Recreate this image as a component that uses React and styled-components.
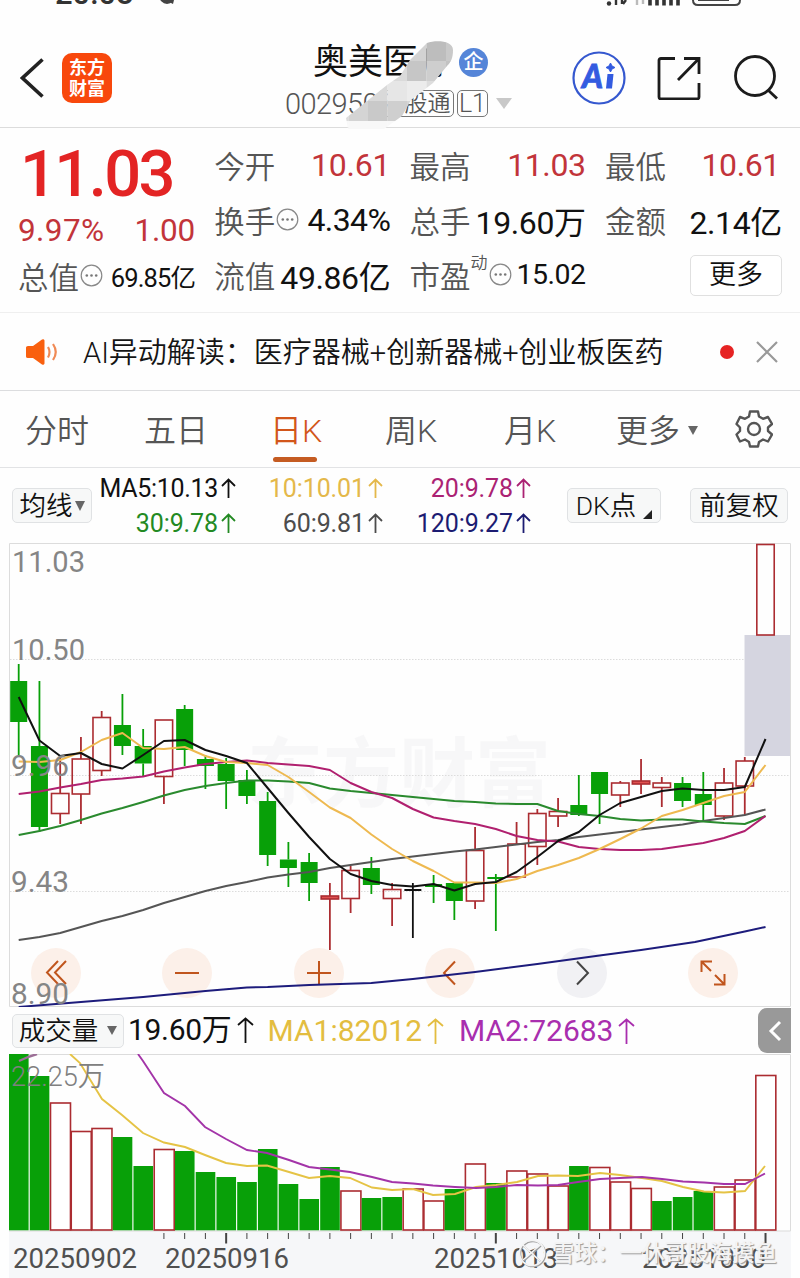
import React from "react";
import styled, { createGlobalStyle } from "styled-components";

const Global = createGlobalStyle`
  * { box-sizing: border-box; }
  body { margin: 0; background: #fff; }
`;
const FONT = `Roboto, "Noto Sans CJK SC", sans-serif`;

const Page = styled.div`
  width: 800px;
  height: 1278px;
  overflow: hidden;
  background: #fefefe;
  font-family: ${FONT};
  font-weight: 350;
  color: #151515;
  white-space: nowrap;
`;

/* ---------- header ---------- */
const StatusBar = styled.div`
  height: 14px;
  overflow: hidden;
  display: flex;
  justify-content: space-between;
  padding: 0 58px 0 55px;
`;
const Clock = styled.span`
  font-size: 31px;
  line-height: 32px;
  margin-top: -22px;
  font-weight: 500;
  color: #333;
  display: flex;
  gap: 24px;
`;
const Header = styled.header`
  height: 114px;
  border-bottom: 1px solid #dcdcdc;
  display: flex;
  align-items: center;
  padding: 0 20px;
  position: relative;
`;
const Logo = styled.div`
  width: 50px;
  height: 50px;
  margin: 15px 0 0 18px;
  border-radius: 10px;
  background: #f8480c;
  color: #fff;
  font: 700 18px/21px "Noto Sans CJK SC", sans-serif;
  display: grid;
  place-content: center;
  text-align: center;
  padding-bottom: 3px;
`;
const TitleBlock = styled.div`
  width: 229px;
  margin: 24px 0 0 173px;
`;
const TitleRow = styled.div`
  display: flex;
  align-items: center;
  height: 42px;
  padding-left: 28px;
  gap: 6px;
  font-size: 35px;
  line-height: 42px;
  font-weight: 400;
  color: #111;
`;
const Verified = styled.span`
  width: 29px;
  height: 29px;
  border-radius: 50%;
  background: #5585d8;
  color: #fff;
  font-size: 20px;
  line-height: 28px;
  text-align: center;
  font-weight: 500;
`;
const CodeRow = styled.div`
  display: flex;
  align-items: center;
  height: 40px;
  color: #555;
  font-size: 29px;
  font-weight: 350;
  letter-spacing: -0.6px;
`;
const Tag = styled.span`
  height: 27px;
  border: 1px solid #777;
  border-radius: 5px;
  font-size: ${(p) => p.$size}px;
  line-height: 25px;
  width: ${(p) => p.$w}px;
  margin-left: ${(p) => p.$ml}px;
  text-align: center;
  letter-spacing: 0;
  overflow: hidden;
`;
const Caret = styled.i`
  border: ${(p) => p.$w / 2}px solid transparent;
  border-top: ${(p) => p.$h}px solid ${(p) => p.$c || "#666"};
  border-bottom: 0;
  margin-left: ${(p) => p.$ml || 0}px;
`;
const Mosaic = styled.svg`
  position: absolute;
  left: 335px;
  top: 22px;
`;
const Actions = styled.div`
  display: flex;
  align-items: center;
  gap: 31px;
  margin: 15px 0 0 58px;
`;

/* ---------- quote ---------- */
const Quote = styled.section`
  height: 185px;
  border-bottom: 1px solid #efefef;
  padding: 9px 19px 0 18px;
  display: grid;
  grid-template-columns: 177px 176px 176px 177px;
  column-gap: 19.3px;
`;
const QuoteCol = styled.div`
  display: grid;
  grid-template-rows: 55px 55px 55px;
`;
const PriceCol = styled.div`
  display: grid;
  grid-template-rows: 74px 38px 53px;
`;
const Price = styled.div`
  padding: 2px 0 0 2px;
  font-size: 65px;
  line-height: 70px;
  font-weight: 500;
  color: #e32424;
  letter-spacing: -2.6px;
`;
const Cell = styled.div`
  display: flex;
  align-items: center;
  justify-content: space-between;
`;
const Label = styled.span`
  font-size: 30.5px;
  color: #555;
  display: flex;
  align-items: center;
`;
const Value = styled.span`
  font-size: ${(p) => p.$size || 32}px;
  font-weight: 400;
  letter-spacing: ${(p) => p.$ls ?? -0.4}px;
  color: ${(p) => (p.$red ? "#c2343a" : "#111")};
  margin-right: ${(p) => p.$mr || 0}px;
`;
const Sup = styled.sup`
  font-size: 17px;
  line-height: 17px;
  align-self: flex-start;
  margin: 2px 0 0 0;
`;
const MoreButton = styled.button`
  width: 92px;
  height: 41px;
  margin-left: auto;
  position: relative;
  top: 1px;
  background: #fff;
  border: 1px solid #e0e0e0;
  border-radius: 5px;
  font: 350 27px/36px ${FONT};
  color: #111;
  padding: 0 0 2px;
`;

/* ---------- news ---------- */
const News = styled.section`
  height: 78px;
  border-bottom: 1px solid #dcdddf;
  display: flex;
  align-items: center;
  padding: 0 22px 0 24px;
`;
const NewsText = styled.span`
  flex: 1;
  margin-left: 24px;
  padding-bottom: 4px;
  font-size: 29px;
  color: #151515;
`;
const Dot = styled.i`
  width: 14px;
  height: 14px;
  border-radius: 50%;
  background: #e62323;
  margin-right: 22px;
`;

/* ---------- tabs ---------- */
const Tabs = styled.nav`
  height: 77px;
  border-bottom: 1px solid #e2e3e5;
  padding-left: 25px;
  display: grid;
  grid-template-columns: 119px 126px 115px 119px 112px 111px 60px;
`;
const Tab = styled.div`
  font-size: 32px;
  line-height: 46px;
  padding-top: ${(p) => (p.$icon ? 0 : 3)}px;
  color: ${(p) => (p.$active ? "#d2561b" : "#555")};
  display: flex;
  align-items: center;
  position: relative;
  &::after {
    content: "";
    display: ${(p) => (p.$active ? "block" : "none")};
    position: absolute;
    left: 3px;
    bottom: 5px;
    width: 44px;
    height: 5px;
    border-radius: 3px;
    background: #c55c22;
  }
`;

/* ---------- moving averages ---------- */
const MaRow = styled.section`
  height: 75px;
  display: flex;
  align-items: center;
  padding: 0 11px 0 12px;
`;
const Chip = styled.button`
  height: ${(p) => p.$h || 35}px;
  width: ${(p) => p.$w}px;
  padding: 0;
  border: 1px solid #e0e2e4;
  border-radius: 5px;
  background: #f7f8f8;
  color: #111;
  font: 350 ${(p) => p.$size || 26.5}px/30px ${FONT};
  display: flex;
  align-items: center;
  justify-content: center;
  margin-left: ${(p) => p.$ml || 0}px;
`;
const MaGrid = styled.div`
  display: grid;
  grid-template-columns: 144px 147px 148px;
  grid-template-rows: 35px 35px;
`;
const MaItem = styled.span`
  display: flex;
  align-items: center;
  justify-content: flex-end;
  gap: 3px;
  font-size: 25px;
  font-weight: 400;
  letter-spacing: ${(p) => p.$ls ?? -0.1}px;
  color: ${(p) => p.$c};
`;

/* ---------- charts ---------- */
const ChartBox = styled.section`
  height: 464px;
  margin-left: 9px;
  width: 782px;
  position: relative;
`;
const ChartSvg = styled.svg`
  display: block;
  position: relative;
`;
const Controls = styled.div`
  position: absolute;
  left: 22px;
  right: 53px;
  bottom: 9px;
  display: flex;
  justify-content: space-between;
`;
const Round = styled.div`
  width: 50px;
  height: 50px;
  border-radius: 50%;
  background: ${(p) => (p.$grey ? "#f1f1f4" : "#fcf0e9")};
  display: grid;
  place-items: center;
`;
const VolumeHead = styled.div`
  height: 47px;
  display: flex;
  align-items: center;
  padding: 0 9px 0 12px;
`;
const VolItem = styled.span`
  display: flex;
  align-items: center;
  gap: 5px;
  font-size: 30px;
  font-weight: 400;
  line-height: 40px;
  padding-bottom: ${(p) => p.$pb || 0}px;
  color: ${(p) => p.$c};
  margin-left: ${(p) => p.$ml}px;
  letter-spacing: ${(p) => p.$ls}px;
`;
const Collapse = styled.div`
  width: 33px;
  height: 45px;
  border-radius: 9px 0 0 9px;
  background: #999;
  margin-left: auto;
  display: grid;
  place-items: center;
`;
const BottomBox = styled.section`
  width: 782px;
  height: 224px;
  margin-left: 9px;
`;

const Arrow = ({ h = 20, w = 15 }) => (
  <svg width={w} height={h} viewBox={`0 0 ${w} ${h}`} fill="none" stroke="currentColor" strokeWidth="1.8">
    <path d={`M${w / 2} ${h}V1.5M1 8L${w / 2} 1.5L${w - 1} 8`} />
  </svg>
);
const Info = () => (
  <svg width="23" height="23" viewBox="0 0 23 23" fill="none" stroke="#888" strokeWidth="1.2" style={{ marginLeft: 1 }}>
    <circle cx="11.5" cy="11.5" r="10.3" />
    <g fill="#777" stroke="none">
      <circle cx="6.8" cy="11.5" r="1.3" />
      <circle cx="11.5" cy="11.5" r="1.3" />
      <circle cx="16.2" cy="11.5" r="1.3" />
    </g>
  </svg>
);

const X0 = 18.7;
const STEP = 20.745;
const RED = "#ab2c31";
const GREEN = "#08a008";
const px = (i) => X0 + i * STEP;

// [kind, body top, body bottom, wick top, wick bottom]
const candles = [
  ["g", 681, 722, 664, 756], ["g", 746, 827, 681, 832], ["r", 793.5, 813.5, 755, 824],
  ["r", 759, 794, 737, 824], ["r", 717.5, 770.5, 711, 776], ["g", 725, 746, 694, 755],
  ["g", 746, 763.5, 729, 776], ["r", 720, 776.5, 720, 804], ["g", 709, 750, 705, 766],
  ["g", 759, 766, 755, 789], ["g", 764, 781, 758, 809], ["g", 780, 796, 770, 804],
  ["g", 801, 855, 792, 866], ["g", 859.5, 868, 842, 887], ["g", 862, 883, 853, 901],
  ["t", 896, 899, 883, 950], ["r", 870.5, 898.5, 866, 913], ["g", 868, 885, 857, 894],
  ["r", 889.5, 898.5, 883, 926], ["k", 889, 891, 883, 938], ["g", 884, 887, 875, 903],
  ["g", 883, 901, 883, 920], ["r", 850.5, 901, 827, 909], ["g", 877, 879, 874, 931],
  ["r", 844, 877, 822, 877], ["r", 813.5, 846.5, 809, 865], ["r", 811.5, 816, 798, 827],
  ["g", 805, 815, 775, 816], ["g", 772, 794, 772, 824], ["r", 783, 795, 781, 807],
  ["t", 781, 784, 759, 794], ["r", 783, 787.5, 777, 807], ["g", 783, 801, 777, 807],
  ["g", 794, 805, 772, 821], ["r", 783, 816, 768, 820], ["r", 761, 786, 757, 815],
  ["r", 544.5, 635, 544.5, 635],
];
const ma120 = [[0, 1007], [3, 1002], [6, 997], [9, 991], [11, 987.5], [12, 987], [14, 985], [17, 983], [19, 979], [22, 972], [25, 964], [28, 955.5], [30, 950], [32.6, 942], [35, 931.5], [36, 927]];
const lines = [
  ["#1d1c7c", ma120],
  ["#555", [940, 937, 933, 927, 921, 916, 910, 903, 897, 891, 886, 882, 877.5, 874.5, 872, 868, 865, 862, 859, 856.5, 854, 851.5, 849.5, 847, 844.5, 842, 840, 837, 834.5, 832, 829.5, 827, 824.5, 821, 818, 815, 809.5]],
  ["#2a8a2e", [835, 831, 826, 820, 813.5, 808, 802, 795.5, 790, 786, 783, 780.5, 780.5, 781.5, 783, 788.5, 791, 793, 795, 797, 799, 801, 802, 803.5, 804, 804, 811, 814, 816, 819, 820.5, 819.5, 819.5, 821.5, 823, 824, 816]],
  ["#b0206f", [794, 791.5, 787.5, 784, 780, 778.5, 776.5, 771.5, 767.5, 764, 762, 760.5, 763, 764.5, 766, 770, 783, 792, 798, 809, 817.5, 821, 824, 829, 836, 840, 841.5, 847, 849, 850, 850, 849, 846, 843, 838, 831, 816]],
  ["#eeb950", [761.5, 762, 760, 752, 740, 733, 748, 749, 747, 756, 762, 763, 765, 777, 792, 807.5, 818, 834.5, 849, 861, 871, 882.5, 882.5, 883, 879, 871, 865, 858, 849, 839, 828.5, 816, 810, 803, 796, 792, 765]],
  ["#111", [697, 740.5, 756, 753, 764, 768.5, 755, 741, 740, 750, 756, 763, 788, 813, 837, 859, 874, 881, 885, 886.5, 884, 890.5, 884, 882, 872, 857, 841, 832, 815, 803, 797, 791, 788.5, 790, 790, 787, 739]],
];
const toPoints = (pts) =>
  pts.map((p, i) => (Array.isArray(p) ? `${px(p[0])},${p[1]}` : `${px(i)},${p}`)).join(" ");

const Candle = ({ i, c: [k, t, b, wt, wb] }) => {
  const x = px(i);
  const color = k === "g" ? GREEN : k === "k" ? "#111" : RED;
  const hollow = k === "r";
  return (
    <g stroke={color} strokeWidth="1.8">
      {wt < t && <line x1={x} x2={x} y1={wt} y2={t} />}
      {wb > b && <line x1={x} x2={x} y1={b} y2={wb} />}
      {hollow || k === "t" ? (
        <rect x={x - 8.7} y={t} width="17.4" height={b - t} fill={k === "t" ? "#e05050" : "none"} strokeWidth="1.6" />
      ) : (
        <rect x={x - 8.5} y={t} width="17" height={b - t} fill={color} stroke="none" />
      )}
    </g>
  );
};

const Axis = ({ x, y, w, children }) => (
  <text x={x} y={y} textLength={w} lengthAdjust="spacingAndGlyphs" fontSize="29" fill="#858585" fontFamily={FONT} fontWeight="400">
    {children}
  </text>
);

const KChart = () => (
  <ChartSvg width="782" height="464" viewBox="9 543 782 464">
    <text x="247" y="801" fontSize="76" fontWeight="700" textLength="304" fill="#f6f6f7" fillOpacity=".9" fontFamily={`"Noto Sans CJK SC", sans-serif`}>东方财富</text>
    <g stroke="#dcdcdc" strokeDasharray="1.5 1.5">
      {[659.5, 775.5, 891.5].map((y) => <line key={y} x1="10" x2="790" y1={y} y2={y} />)}
    </g>
    <path d="M9.5 543.5H790.5V1006.5H9.5Z" fill="none" stroke="#dcdcdc" />
    <rect x="744.5" y="635" width="45.5" height="121" fill="#d5d5e0" />
    {candles.map((c, i) => <Candle key={i} i={i} c={c} />)}
    {lines.map(([color, pts]) => (
      <polyline key={color} points={toPoints(pts)} fill="none" stroke={color} strokeWidth="2" strokeLinejoin="round" />
    ))}
    <Axis x="12" y="572" w="73">11.03</Axis>
    <Axis x="12" y="660" w="73">10.50</Axis>
    <Axis x="11" y="776" w="58">9.96</Axis>
    <Axis x="11" y="892" w="58">9.43</Axis>
    <Axis x="11" y="1004" w="58">8.90</Axis>
  </ChartSvg>
);

const volumes = [
  ["g", 1054], ["g", 1076], ["r", 1103], ["r", 1131.5], ["r", 1128.5], ["g", 1137], ["g", 1166], ["r", 1149.5],
  ["g", 1151], ["g", 1172], ["g", 1177], ["g", 1182], ["g", 1149], ["g", 1184], ["g", 1199], ["g", 1167],
  ["r", 1191], ["g", 1198], ["g", 1197], ["r", 1189], ["r", 1201], ["g", 1189], ["r", 1164], ["g", 1183],
  ["r", 1171], ["r", 1174], ["r", 1186], ["g", 1166], ["r", 1167.5], ["r", 1182], ["r", 1188.5], ["g", 1201],
  ["g", 1197], ["g", 1191], ["r", 1187], ["r", 1180], ["r", 1075.5],
];
const volYellow = "70,1054 80,1063 102,1099 122,1115 143,1133 164,1142.5 185,1147 205,1155 226,1163 247,1166 267,1165.5 289,1172 309,1178 330,1176 350,1178 372,1187.5 392,1190 413,1189 433,1195 455,1194 476,1187 496,1185 517,1182 538,1176 558,1175.5 578,1176 600,1173 620,1175 642,1178 662,1181 683,1187 704,1191.5 724,1192.5 745,1191 765,1166";
const volPurple = "138,1054 143,1061 164,1093 185,1106 205,1127 226,1139 247,1150 267,1153 289,1160 309,1167 330,1169.5 350,1172 372,1177 392,1182 413,1183.5 433,1185.5 455,1187 476,1188 496,1187 517,1185 538,1185.5 558,1185 578,1182 600,1179 620,1178 642,1177 662,1179 683,1181.5 704,1182.5 724,1184 745,1184 765,1173.5";

const DateLabel = ({ x, w, children }) => (
  <text x={x} y="1268" textLength={w} lengthAdjust="spacingAndGlyphs" fontSize="28" fill="#505050" fontFamily={FONT} fontWeight="400">
    {children}
  </text>
);

const VolumeChart = () => (
  <ChartSvg width="782" height="224" viewBox="9 1054 782 224">
    <rect x="9" y="1230.5" width="782" height="48" fill="#f6f7f9" />
    <path d="M9 1054.5H790.5V1231H9" fill="none" stroke="#dcdcdc" />
    {volumes.map(([k, t], i) =>
      k === "g" ? (
        <rect key={i} x={px(i) - 9.7} y={t} width="19.6" height={1230.3 - t} fill={GREEN} />
      ) : (
        <rect key={i} x={px(i) - 9.7} y={t} width="20" height={1230 - t} fill="#fff" stroke={RED} strokeWidth="1.6" />
      )
    )}
    <polyline points="19,1061 28,1057 37,1054" fill="none" stroke="#9c6f96" strokeWidth="2.4" />
    <polyline points={volYellow} fill="none" stroke="#e5c345" strokeWidth="1.9" />
    <polyline points={volPurple} fill="none" stroke="#a334a8" strokeWidth="1.9" />
    {volumes.map((_, i) =>
      i > 6 ? (
        <line key={i} x1={px(i)} x2={px(i)} y1="1233" y2={i % 13 === 10 ? 1243.5 : 1239} stroke="#444" strokeWidth={i % 13 === 10 ? 2 : 1} />
      ) : null
    )}
    <text x="11" y="1086" textLength="94" lengthAdjust="spacingAndGlyphs" fontSize="28" fill="#808080" fontFamily={FONT} fontWeight="350">22.25万</text>
    <DateLabel x="13" w="124">20250902</DateLabel>
    <DateLabel x="165" w="124">20250916</DateLabel>
    <DateLabel x="434" w="124">20251013</DateLabel>
    <DateLabel x="642" w="124">20251030</DateLabel>
    <g transform="translate(1 1)" stroke="#a0a0a0" fill="none" strokeWidth="1.6">
      <circle cx="532" cy="1253" r="12.5" />
      <path d="M523 1245l17 16M540 1245l-17 15" />
    </g>
    <g stroke="#f4f4f4" fill="none" strokeWidth="1.6">
      <circle cx="532" cy="1253" r="12.5" />
      <path d="M523 1245l17 16M540 1245l-17 15" />
    </g>
    <g fontSize="22.5" fontWeight="500" fontFamily={`"Noto Sans CJK SC", sans-serif`} style={{ textShadow: "1px 1px 1px #999" }} fill="#f4f4f4">
      <text x="552" y="1261" textLength="225" lengthAdjust="spacingAndGlyphs">雪球：一休哥股海摸鱼</text>
    </g>
  </ChartSvg>
);

const mosaicTones = [
  "#e8e8e8", "#e8e8e8", "#e8e8e8", "#d8d8d8", "#d2d2d2", "#bdbdbd", "#c9c9c9",
  "#e8e8e8", "#e8e8e8", "#dedede", "#dadada", "#c6c6c6", "#cecece", "#c2c2c2",
  "#e8e8e8", "#e4e4e4", "#d9d9d9", "#e6e6e6", "#ececec", "#dddddd", "#d2d2d2",
  "#dcdcdc", "#d4d4d4", "#c9c9c9", "#cfcfcf", "#d6d6d6", "#d6d6d6", "#e0e0e0",
  "#f8f8f8", "#f8f8f8", "#f8f8f8", "#f8f8f8", "#f8f8f8", "#f8f8f8", "#f8f8f8",
];
const MosaicBand = () => (
  <Mosaic width="130" height="100" viewBox="335 36 130 100">
    <defs>
      <clipPath id="band">
        <path d="M427 43C435 40 453 40 453 50C453 58 451 62 447 66L433 83L411 100L402 116L384 129H348L346 118L387 85L400 76L410 60Z" />
      </clipPath>
    </defs>
    <g clipPath="url(#band)">
      {mosaicTones.map((tone, n) => (
        <rect key={n} x={329 + (n % 7) * 19.5} y={41 + Math.floor(n / 7) * 20} width="19.6" height="20.1" fill={tone} />
      ))}
    </g>
  </Mosaic>
);

const stroke = { fill: "none", stroke: "#c0551d", strokeWidth: 2 };

export default function App() {
  return (
    <Page>
      <Global />
      <StatusBar>
        <Clock>
          20:08
          <svg width="20" height="32" viewBox="0 0 20 32"><ellipse cx="9" cy="17" rx="8" ry="9" fill="#444" /><path d="M9 23l7-1-1 4z" fill="#444" /></svg>
        </Clock>
        <svg width="136" height="8" viewBox="606 0 136 8">
          <circle cx="609" cy="3.5" r="2.2" fill="#333" />
          <path d="M616 0v5M622 0v4M626 0l-3 4" stroke="#333" strokeWidth="2.4" fill="none" />
          <path d="M637 0v5M643 0v4" stroke="#bbb" strokeWidth="2.4" />
          <path d="M650 0v5.5M657 0v5.5M664 0v5.5M671 0v5.5M678 0v5.5" stroke="#333" strokeWidth="3.6" />
          <path d="M693 -4V0Q693 5 698 5H735Q740 5 740 0V-4" fill="none" stroke="#444" strokeWidth="2" />
          <path d="M698 .5H729" stroke="#444" />
        </svg>
      </StatusBar>

      <Header>
        <svg width="24" height="42" viewBox="0 0 24 42" style={{ marginTop: 15 }} fill="none" stroke="#222" strokeWidth="3.6">
          <path d="M22.5 2.5L2.5 21l20 18.5" />
        </svg>
        <Logo>东方<br />财富</Logo>
        <TitleBlock>
          <TitleRow>奥美医疗<Verified>企</Verified></TitleRow>
          <CodeRow>
            002950
            <Tag $w={76} $ml={0} $size={23}>深股通</Tag>
            <Tag $w={31} $ml={3} $size={25}>L1</Tag>
            <Caret $w={16} $h={11} $c="#c8c8c8" $ml={8} />
          </CodeRow>
        </TitleBlock>
        <MosaicBand />
        <Actions>
          <svg width="54" height="54" viewBox="0 0 54 54">
            <circle cx="27" cy="27" r="25.5" fill="none" stroke="#3558cf" strokeWidth="2.2" />
            <text x="10" y="37" fontSize="32" fontWeight="900" fontStyle="italic" fontFamily="Lato, sans-serif" fill="#335be0" stroke="#335be0" strokeWidth=".8" textLength="21" lengthAdjust="spacingAndGlyphs">A</text>
            <path d="M35.5 23h6l-1.5 14.5h-6Z" fill="#335be0" />
            <path d="M38.5 12l1.5 3 3 1.5-3 1.5-1.5 3-1.5-3-3-1.5 3-1.5Z" fill="#335be0" stroke="#335be0" />
          </svg>
          <svg width="44" height="44" viewBox="0 0 44 44" fill="none" stroke="#1c1c1c" strokeWidth="2.8">
            <path d="M18 2.5H4Q2 2.5 2 4.5V41Q2 43 4 43H40Q42 43 42 41V27M27 2.5H42V18M42 2.5L21 24" />
          </svg>
          <svg width="46" height="46" viewBox="0 0 46 46" fill="none" stroke="#1c1c1c" strokeWidth="2.8">
            <circle cx="23" cy="21" r="19.5" />
            <path d="M36.5 35.5L45 43.5" />
          </svg>
        </Actions>
      </Header>

      <Quote>
        <PriceCol>
          <Price>11.03</Price>
          <Cell>
            <Value $red $size={31.5} $ls={0.4}>9.97%</Value>
            <Value $red $size={31.5} $ls={-0.2}>1.00</Value>
          </Cell>
          <Cell><Label>总值<Info /></Label><Value $size={25.5} $ls={-0.9}>69.85亿</Value></Cell>
        </PriceCol>
        <QuoteCol>
          <Cell><Label>今开</Label><Value $red $ls={-0.2}>10.61</Value></Cell>
          <Cell><Label>换手<Info /></Label><Value $ls={-0.6}>4.34%</Value></Cell>
          <Cell><Label>流值</Label><Value>49.86亿</Value></Cell>
        </QuoteCol>
        <QuoteCol>
          <Cell><Label>最高</Label><Value $red>11.03</Value></Cell>
          <Cell><Label>总手</Label><Value>19.60万</Value></Cell>
          <Cell><Label>市盈<Sup>动</Sup><Info /></Label><Value $size={28.5} $ls={-0.5}>15.02</Value></Cell>
        </QuoteCol>
        <QuoteCol>
          <Cell><Label>最低</Label><Value $red $mr={2}>10.61</Value></Cell>
          <Cell><Label>金额</Label><Value>2.14亿</Value></Cell>
          <Cell><MoreButton>更多</MoreButton></Cell>
        </QuoteCol>
      </Quote>

      <News>
        <svg width="35" height="28" viewBox="0 0 35 28">
          <path d="M2 9.5Q2 8 4 8H9L18 1.5Q20 .5 20.5 2.5V25.5Q20 27.5 18 26.5L9 20H4Q2 20 2 18.5Z" fill="#f9600f" />
          <path d="M24 9q3 5 0 10.5M29 6q5.5 8 0 16" fill="none" stroke="#f08a55" strokeWidth="2.2" />
        </svg>
        <NewsText>AI异动解读：医疗器械+创新器械+创业板医药</NewsText>
        <Dot />
        <svg width="22" height="22" viewBox="0 0 22 22" stroke="#999" strokeWidth="2.2"><path d="M1 1L21 21M21 1L1 21" /></svg>
      </News>

      <Tabs>
        <Tab>分时</Tab><Tab>五日</Tab><Tab $active>日K</Tab><Tab>周K</Tab><Tab>月K</Tab>
        <Tab>更多<Caret $w={11} $h={9} $ml={8} /></Tab>
        <Tab $icon>
          <svg width="38" height="38" viewBox="0 0 38 38" fill="none" stroke="#555" strokeWidth="2.4" strokeLinejoin="round" style={{ marginLeft: 8 }}>
            <path d="M15 1.5H23L24 6.5L28 8.8L33 7L37 14L33 17.5V21L37 24.5L33 31.5L28 29.5L24 32L23 36.5H15L14 32L10 29.5L5 31.5L1.5 24.5L5 21V17.5L1.5 14L5 7L10 8.8L14 6.5Z" />
            <circle cx="19" cy="19" r="6" />
          </svg>
        </Tab>
      </Tabs>

      <MaRow>
        <Chip $w={80}>均线<Caret $w={11} $h={10} $ml={2} /></Chip>
        <MaGrid>
          <MaItem $c="#111" $ls={-0.3}>MA5:10.13<Arrow /></MaItem>
          <MaItem $c="#e4b84a">10:10.01<Arrow /></MaItem>
          <MaItem $c="#ab2273">20:9.78<Arrow /></MaItem>
          <MaItem $c="#238a23">30:9.78<Arrow /></MaItem>
          <MaItem $c="#4c4c4c">60:9.81<Arrow /></MaItem>
          <MaItem $c="#1c1c72">120:9.27<Arrow /></MaItem>
        </MaGrid>
        <Chip $w={94} $ml={36}>
          DK点
          <svg width="9" height="9" viewBox="0 0 9 9" style={{ margin: "18px 0 0 7px" }}><path d="M9 0V9H0Z" fill="#222" /></svg>
        </Chip>
        <Chip $w={98} $ml={29}>前复权</Chip>
      </MaRow>

      <ChartBox>
        <Controls>
          <Round><svg width="22" height="26" viewBox="0 0 22 26" {...stroke}><path d="M13 1L2 12.5L13 24M21 1L10 12.5L21 24" /></svg></Round>
          <Round><svg width="26" height="26" viewBox="0 0 26 26" {...stroke}><path d="M1 13H25" /></svg></Round>
          <Round><svg width="26" height="26" viewBox="0 0 26 26" {...stroke}><path d="M1 13H25M13 1V25" /></svg></Round>
          <Round><svg width="16" height="26" viewBox="0 0 16 26" {...stroke}><path d="M13 1.5L2 13L13 24.5" /></svg></Round>
          <Round $grey><svg width="16" height="26" viewBox="0 0 16 26" {...stroke} stroke="#444"><path d="M3 1.5L14 13L3 24.5" /></svg></Round>
          <Round><svg width="26" height="26" viewBox="0 0 26 26" {...stroke}><path d="M1.5 12V1.5H12M1.5 1.5L11 11M24.5 14V24.5H14M24.5 24.5L15 15" /></svg></Round>
        </Controls>
        <KChart />
      </ChartBox>

      <VolumeHead>
        <Chip $w={112} $h={34}>成交量<Caret $w={11} $h={9} $ml={9} /></Chip>
        <VolItem $c="#111" $ml={4} $ls={-0.3} $pb={1}>19.60万<Arrow w={17} h={26} /></VolItem>
        <VolItem $c="#e3bd40" $ml={14} $ls={0}>MA1:82012<Arrow w={17} h={26} /></VolItem>
        <VolItem $c="#a92eae" $ml={15} $ls={0}>MA2:72683<Arrow w={17} h={26} /></VolItem>
        <Collapse>
          <svg width="14" height="22" viewBox="0 0 14 22" fill="none" stroke="#fff" strokeWidth="3"><path d="M12 2L3 11L12 20" /></svg>
        </Collapse>
      </VolumeHead>

      <BottomBox><VolumeChart /></BottomBox>
    </Page>
  );
}
